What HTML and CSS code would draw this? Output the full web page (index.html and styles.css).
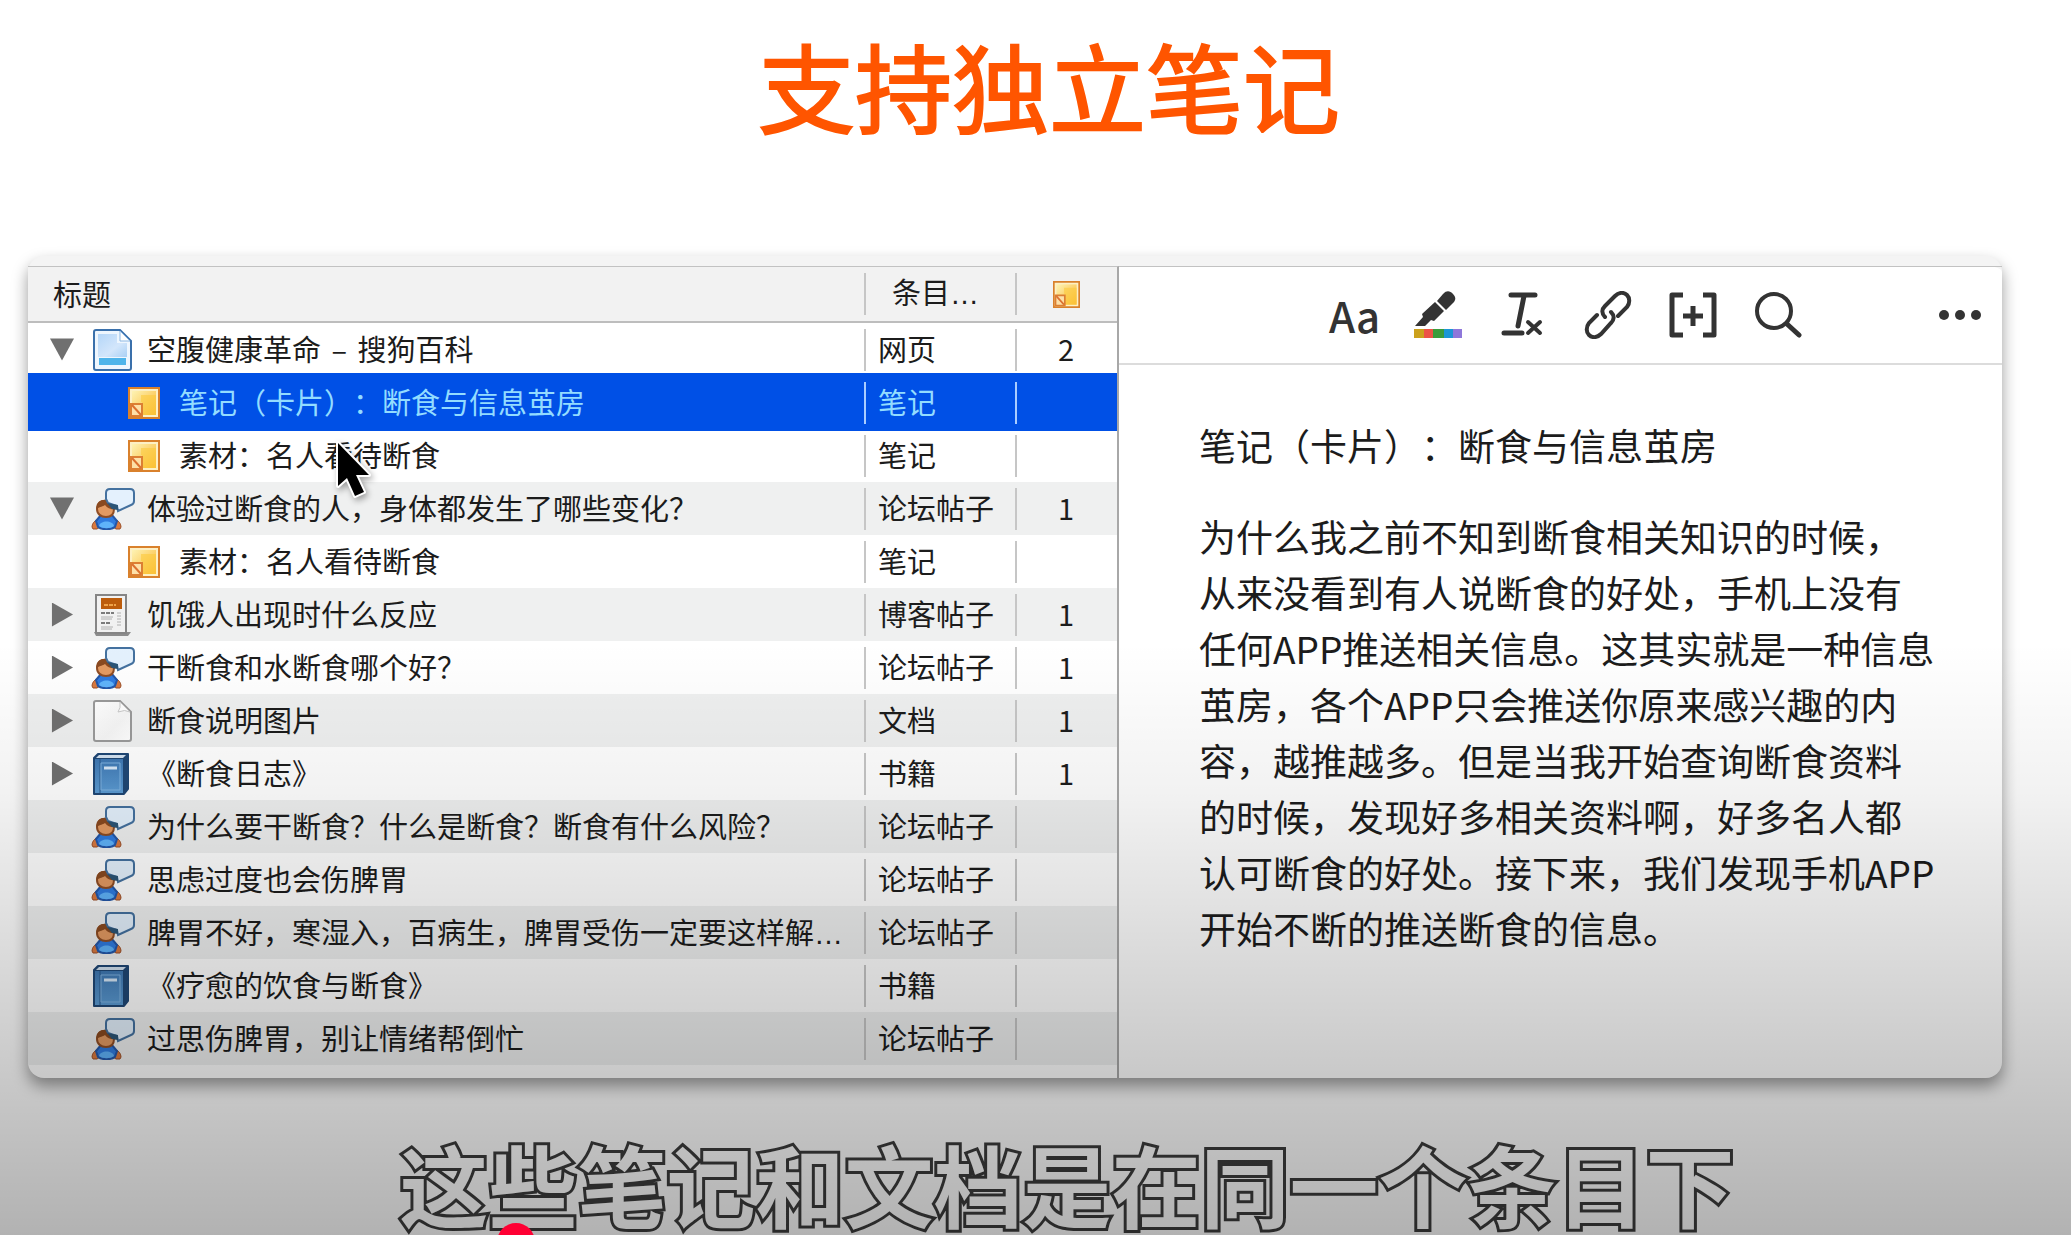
FILE: index.html
```html
<!DOCTYPE html>
<html lang="zh-CN">
<head>
<meta charset="utf-8">
<title>支持独立笔记</title>
<link rel="stylesheet" href="styles.css">
</head>
<body>
<svg class="defs" aria-hidden="true">
  <defs>
    <linearGradient id="g-page" x1="0" y1="0" x2="1" y2="1"><stop offset="0" stop-color="#b4d6f8"/><stop offset=".6" stop-color="#d3e6fb"/><stop offset="1" stop-color="#a9d0f5"/></linearGradient>
    <linearGradient id="g-note" x1="0" y1="0" x2="1" y2="1"><stop offset="0" stop-color="#fdf3b4"/><stop offset="1" stop-color="#fbb42c"/></linearGradient>
    <linearGradient id="g-book" x1="0" y1="0" x2="0" y2="1"><stop offset="0" stop-color="#3f78b3"/><stop offset="1" stop-color="#5b9bd3"/></linearGradient>
    <linearGradient id="g-doc" x1="0" y1="0" x2="1" y2="1"><stop offset="0" stop-color="#fff"/><stop offset=".6" stop-color="#f6f6f6"/><stop offset="1" stop-color="#fff"/></linearGradient>
    <symbol id="i-page" viewBox="0 0 44 42">
      <path d="M5 1h24l11 11v27a2 2 0 0 1-2 2H5a2 2 0 0 1-2-2V3a2 2 0 0 1 2-2z" fill="#eef6fe" stroke="#3a70ab" stroke-width="2"/>
      <path d="M7 5h19v9h10v14H7z" fill="url(#g-page)"/>
      <path d="M29 2v10h10z" fill="#fff" stroke="#8db8e3"/>
      <path d="M8 29h27v7H8z" fill="#4eb4ea"/>
    </symbol>
    <symbol id="i-note" viewBox="0 0 32 32">
      <path d="M1 1h30v30H1z" fill="#fdf0c4" stroke="#d9812c" stroke-width="2"/>
      <path d="M4 4h24v24H4z" fill="url(#g-note)"/>
      <path d="M13 8h15v20H14V15h-1z" fill="#fbc93c" opacity=".6"/>
      <path d="M3 17h11v12H3z" fill="#fde0a8" stroke="#dc7f33" stroke-width="2"/>
      <path d="M4 18l9 10" stroke="#dc7030" stroke-width="2"/>
    </symbol>
    <symbol id="i-forum" viewBox="0 0 44 42">
      <path d="M1 39c0-3 2-6 5-7l3 7-3 2H2zM30 39c0-3-2-6-5-7l-3 7 3 2h4z" fill="#d9793f" stroke="#9c4f28"/>
      <path d="M5 33l5-6h11l5 6-2 6c-4 3-13 3-17 0z" fill="#2f7be0" stroke="#2457a8" stroke-width="2"/>
      <path d="M8 38c1-6 14-6 15 0-4 3-11 3-15 0z" fill="#5fb3fa"/>
      <path d="M6 21c0-6 4-9 10-8 6 0 7 4 7 8 0 5-3 8-8 8s-9-3-9-8z" fill="#e39a62" stroke="#8f4d24" stroke-width="2"/>
      <path d="M6 21c-1-7 4-10 11-9 6 1 7 5 9 9-5 1-9 0-12-4-2 2-5 1-8 4z" fill="#8a4a20"/>
      <path d="M19 1h20q4 0 4 4v8q0 3-3 4l-13 6-1-5-9-3-2-4V5q0-4 4-4z" fill="#e4f1fd" stroke="#44719f" stroke-width="2"/>
      <path d="M16 15l11 2v5l-6-1z" fill="#2c5576"/>
    </symbol>
    <symbol id="i-blog" viewBox="0 0 44 42">
      <path d="M3 38h37l-3 4H5z" fill="#8c8c8c"/>
      <path d="M5 1h30v38H5z" fill="#f1f1f1" stroke="#858585" stroke-width="2"/>
      <path d="M10 4h21v11H10z" fill="#bc5c0c"/>
      <path d="M13 11h12" stroke="#efa34a" stroke-width="2" stroke-dasharray="4 1"/>
      <path d="M10 19h13M10 29h10" stroke="#7b7b7b" stroke-width="2" stroke-dasharray="4 1"/>
      <path d="M10 23h12M10 25h11M10 33h12M10 35h11M26 19h4M26 22h4M26 25h4M26 28h4M26 31h4" stroke="#b0b0b0"/>
    </symbol>
    <symbol id="i-doc" viewBox="0 0 44 42">
      <path d="M5 1h24l11 11v27a2 2 0 0 1-2 2H5a2 2 0 0 1-2-2V3a2 2 0 0 1 2-2z" fill="url(#g-doc)" stroke="#9a9a9a" stroke-width="2"/>
      <path d="M29 2q1 6-2 10 7-3 12 0z" fill="#fff" stroke="#c9c9c9"/>
    </symbol>
    <symbol id="i-book" viewBox="0 0 44 42">
      <path d="M3 5l4-4h30v35l-4 5H3z" fill="#1f4775" stroke="#1f4775" stroke-width="2" stroke-linejoin="round"/>
      <path d="M5 5l3-3h27l-3 3z" fill="#d3e2f1"/>
      <path d="M4 6h28v34H4z" fill="url(#g-book)"/>
      <path d="M9 6v34" stroke="#2a5a8d"/>
      <path d="M10 10h19v27H10z" fill="none" stroke="#7fb2e0"/>
      <path d="M13 15h13" stroke="#d7e8f8" stroke-width="3"/>
    </symbol>
  </defs>
</svg>

<main class="stage">
  <h1 class="headline">支持独立笔记</h1>

  <div class="window">
    <section class="library">
      <table class="items">
        <colgroup><col><col class="col-type"><col class="col-count"></colgroup>
        <thead>
          <tr>
            <th scope="col">标题</th>
            <th scope="col" class="head-type">条目<span class="dots">…</span></th>
            <th scope="col" class="count"><svg class="head-note" role="img" aria-label="笔记"><use href="#i-note"/></svg></th>
          </tr>
        </thead>
        <tbody>
          <tr>
            <td><div class="item"><button class="toggle open" aria-label="折叠"></button><svg class="icon"><use href="#i-page"/></svg><span class="name">空腹健康革命<span class="dash"> – </span>搜狗百科</span></div></td>
            <td>网页</td><td class="count">2</td>
          </tr>
          <tr class="selected">
            <td><div class="item child"><svg class="icon"><use href="#i-note"/></svg><span class="name">笔记（卡片）：断食与信息茧房</span></div></td>
            <td>笔记</td><td class="count"></td>
          </tr>
          <tr>
            <td><div class="item child"><svg class="icon"><use href="#i-note"/></svg><span class="name">素材：名人看待断食</span></div></td>
            <td>笔记</td><td class="count"></td>
          </tr>
          <tr>
            <td><div class="item"><button class="toggle open" aria-label="折叠"></button><svg class="icon"><use href="#i-forum"/></svg><span class="name">体验过断食的人，身体都发生了哪些变化？</span></div></td>
            <td>论坛帖子</td><td class="count">1</td>
          </tr>
          <tr>
            <td><div class="item child"><svg class="icon"><use href="#i-note"/></svg><span class="name">素材：名人看待断食</span></div></td>
            <td>笔记</td><td class="count"></td>
          </tr>
          <tr>
            <td><div class="item"><button class="toggle" aria-label="展开"></button><svg class="icon"><use href="#i-blog"/></svg><span class="name">饥饿人出现时什么反应</span></div></td>
            <td>博客帖子</td><td class="count">1</td>
          </tr>
          <tr>
            <td><div class="item"><button class="toggle" aria-label="展开"></button><svg class="icon"><use href="#i-forum"/></svg><span class="name">干断食和水断食哪个好？</span></div></td>
            <td>论坛帖子</td><td class="count">1</td>
          </tr>
          <tr>
            <td><div class="item"><button class="toggle" aria-label="展开"></button><svg class="icon"><use href="#i-doc"/></svg><span class="name">断食说明图片</span></div></td>
            <td>文档</td><td class="count">1</td>
          </tr>
          <tr>
            <td><div class="item"><button class="toggle" aria-label="展开"></button><svg class="icon"><use href="#i-book"/></svg><span class="name">《断食日志》</span></div></td>
            <td>书籍</td><td class="count">1</td>
          </tr>
          <tr>
            <td><div class="item leaf"><svg class="icon"><use href="#i-forum"/></svg><span class="name">为什么要干断食？什么是断食？断食有什么风险？</span></div></td>
            <td>论坛帖子</td><td class="count"></td>
          </tr>
          <tr>
            <td><div class="item leaf"><svg class="icon"><use href="#i-forum"/></svg><span class="name">思虑过度也会伤脾胃</span></div></td>
            <td>论坛帖子</td><td class="count"></td>
          </tr>
          <tr>
            <td><div class="item leaf"><svg class="icon"><use href="#i-forum"/></svg><span class="name">脾胃不好，寒湿入，百病生，脾胃受伤一定要这样解<span class="dots">…</span></span></div></td>
            <td>论坛帖子</td><td class="count"></td>
          </tr>
          <tr>
            <td><div class="item leaf"><svg class="icon"><use href="#i-book"/></svg><span class="name">《疗愈的饮食与断食》</span></div></td>
            <td>书籍</td><td class="count"></td>
          </tr>
          <tr>
            <td><div class="item leaf"><svg class="icon"><use href="#i-forum"/></svg><span class="name">过思伤脾胃，别让情绪帮倒忙</span></div></td>
            <td>论坛帖子</td><td class="count"></td>
          </tr>
        </tbody>
      </table>
      <svg class="cursor" viewBox="0 0 40 64" aria-hidden="true">
        <path d="M4 4v43l9-8 8 18 9-4-8-17h13z" fill="#000" stroke="#fff" stroke-width="4" stroke-linejoin="round" paint-order="stroke"/>
      </svg>
    </section>

    <section class="editor">
      <div class="toolbar">
        <div class="tools">
          <button class="tool tool-text" aria-label="文字样式">Aa</button>
          <button class="tool" aria-label="高亮颜色">
            <svg viewBox="0 0 48 48">
              <path d="M1 35l8-9-1-3 13-12 9 9-10 10-3-1-6 6z" fill="#333"/>
              <path d="M23 10l6-7c4-4 7-3 10 0s3 6 0 9l-7 7z" fill="#333"/>
              <path d="M0 38h10v9H0z" fill="#cba11c"/><path d="M10 38h9v9h-9z" fill="#ec5247"/><path d="M19 38h11v9H19z" fill="#3a9c3c"/><path d="M30 38h9v9h-9z" fill="#1c97d6"/><path d="M39 38h9v9h-9z" fill="#8e77da"/>
            </svg>
          </button>
          <button class="tool" aria-label="清除格式">
            <svg viewBox="0 0 48 48" fill="none" stroke="#333" stroke-linecap="round">
              <path d="M12 4h24M5 42h18" stroke-width="5"/><path d="M25 5l-6 30" stroke-width="5"/><path d="M29 31l12 11M41 31l-12 11" stroke-width="4"/>
            </svg>
          </button>
          <button class="tool" aria-label="链接">
            <svg viewBox="0 0 48 48" fill="none" stroke="#333" stroke-width="4" stroke-linecap="round">
              <path d="M21 26c-4-4-3-8 0-11L31 5c4-4 9-4 12-1s3 8 0 12l-9 9"/><path d="M27 21c4 4 3 8 0 11L17 43c-4 4-9 4-12 1s-3-8 0-12l8-8"/>
            </svg>
          </button>
          <button class="tool" aria-label="插入引用">
            <svg viewBox="0 0 48 48" fill="none" stroke="#333" stroke-width="5">
              <path d="M14 4H3v40h11M34 4h11v40H34" stroke-linejoin="round"/><path d="M24 15v20M14 25h20"/>
            </svg>
          </button>
          <button class="tool" aria-label="查找">
            <svg viewBox="0 0 48 48" fill="none" stroke="#333" stroke-width="4" stroke-linecap="round">
              <circle cx="20" cy="20" r="17"/><path d="M33 33l12 11" stroke-width="5"/>
            </svg>
          </button>
        </div>
        <button class="tool more" aria-label="更多">
          <svg viewBox="0 0 48 48" fill="#333"><circle cx="8" cy="24" r="5"/><circle cx="24" cy="24" r="5"/><circle cx="40" cy="24" r="5"/></svg>
        </button>
      </div>
      <article class="note">
        <h2>笔记（卡片）：断食与信息茧房</h2>
        <p>为什么我之前不知到断食相关知识的时候，从来没看到有人说断食的好处，手机上没有任何APP推送相关信息。这其实就是一种信息茧房，各个APP只会推送你原来感兴趣的内容，越推越多。但是当我开始查询断食资料的时候，发现好多相关资料啊，好多名人都认可断食的好处。接下来，我们发现手机APP开始不断的推送断食的信息。</p>
      </article>
    </section>
  </div>

  <p class="caption">这些笔记和文档是在同一个条目下</p>
  <div class="shade"></div>
  <span class="playhead"></span>
</main>
</body>
</html>
```
FILE: styles.css
```css
* {
  box-sizing: border-box;
}

body {
  margin: 0;
  background: #fff;
  color: #1c1c1c;
  font-family: "Noto Sans CJK SC", sans-serif;
  font-size: 29px;
  text-spacing-trim: space-all;
  text-autospace: no-autospace;
}

button {
  border: 0;
  padding: 0;
  background: none;
  color: inherit;
  font: inherit;
}

.defs {
  position: absolute;
  width: 0;
  height: 0;
}

.stage {
  position: relative;
  min-height: 100vh;
  padding-top: 24px;
  overflow: hidden;
}

.headline {
  margin: 0 0 112px;
  padding-left: 27px;
  color: #ff5500;
  font-size: 97px;
  font-weight: 400;
  line-height: 120px;
  text-align: center;
  -webkit-text-stroke: 2px #ff5500;
}

.window {
  display: grid;
  grid-template-columns: 1091fr 883fr;
  margin: 0 69px 0 28px;
  border-top: 10px solid #f4f4f4;
  border-radius: 16px;
  background: #fff;
  box-shadow: 0 8px 16px rgba(0, 0, 0, .4);
}

/* item list */

.library {
  position: relative;
  min-width: 0;
  padding-bottom: 13px;
  border-top: 1px solid #c2c2c2;
  border-right: 2px solid #a8a8a8;
  border-bottom-left-radius: 16px;
}

.items {
  width: 100%;
  table-layout: fixed;
  border-collapse: separate;
  border-spacing: 0;
  line-height: 42px;
}

.col-type {
  width: 151px;
}

.col-count {
  width: 102px;
}

.items th {
  height: 56px;
  padding: 0 0 3px 25px;
  border-bottom: 2px solid #bdbdbd;
  background-color: #f2f2f2;
  font-weight: 400;
  text-align: left;
}

.items td {
  height: 53px;
  padding: 0 0 4px 14px;
  white-space: nowrap;
}

.items td:first-child {
  padding: 0;
}

.items td + td,
.items th + th {
  background-image: linear-gradient(#c6c6c6, #c6c6c6);
  background-position: left center;
  background-repeat: no-repeat;
  background-size: 2px 42px;
}

.items .head-type {
  padding-left: 28px;
}

.items .count {
  padding-left: 0;
  text-align: center;
}

.items tbody tr:nth-child(even) {
  background-color: #eff0f0;
}

.items tbody tr.selected {
  background-color: #0050e6;
  box-shadow: 0 -3px #0050e6, 0 2px #0050e6;
  color: #93dcff;
}

.items .selected td + td {
  background-image: linear-gradient(#a9ccff, #a9ccff);
}

.dots {
  font-family: "Liberation Sans", sans-serif;
}

.dash {
  padding: 0 4px;
}

.head-note {
  display: inline-block;
  width: 27px;
  height: 27px;
  vertical-align: -2px;
}

.item {
  display: flex;
  align-items: center;
  gap: 12px;
  padding-left: 22px;
}

.item .icon {
  flex: none;
  width: 44px;
  height: 42px;
}

.leaf {
  padding-left: 63px;
}

.child {
  gap: 19px;
  padding-left: 100px;
}

.child .icon {
  width: 32px;
  height: 32px;
}

.name {
  padding-bottom: 4px;
}

.item .dots {
  line-height: 1;
}

.toggle {
  flex: none;
  width: 24px;
  height: 24px;
  margin-right: 5px;
  background: #707070;
  clip-path: polygon(8% 0, 96% 50%, 8% 100%);
}

.toggle.open {
  clip-path: polygon(0 4%, 100% 4%, 50% 96%);
}

.cursor {
  position: absolute;
  top: 172px;
  left: 306px;
  width: 40px;
  height: 64px;
  filter: drop-shadow(2px 3px 3px rgba(0, 0, 0, .35));
}

/* note editor */

.editor {
  min-width: 0;
  border-top: 1px solid #c2c2c2;
}

.toolbar {
  display: grid;
  grid-template-columns: 1fr auto 1fr;
  align-items: center;
  height: 98px;
  padding: 0 18px 0 28px;
  border-bottom: 2px solid #dcdcdc;
}

.tools {
  display: flex;
  grid-column: 2;
  gap: 37px;
}

.tool {
  width: 48px;
  height: 48px;
  color: #333;
}

.tool svg {
  display: block;
  width: 48px;
  height: 48px;
}

.tool-text {
  font-size: 42px;
  font-weight: 500;
  line-height: 44px;
}

.more {
  justify-self: end;
}

.note {
  padding: 52px 66px 40px 80px;
  font-size: 37px;
  line-height: 56px;
}

.note h2 {
  margin: 0 0 35px;
  font-size: 37px;
  font-weight: 400;
}

.note p {
  margin: 0;
}

/* video layer */

.caption {
  margin: 58px 0 0;
  padding-left: 63px;
  color: #fff;
  font-size: 89px;
  font-weight: 700;
  line-height: 94px;
  text-align: center;
  white-space: nowrap;
  -webkit-text-stroke: 6px #3c3c3c;
  paint-order: stroke fill;
}

.shade {
  position: absolute;
  inset: 0;
  background: linear-gradient(transparent 52%, rgba(0, 0, 0, .05) 64%, rgba(0, 0, 0, .15) 78%, rgba(0, 0, 0, .3));
  pointer-events: none;
}

.playhead {
  position: absolute;
  bottom: -26px;
  left: 24%;
  width: 38px;
  height: 38px;
  border-radius: 50%;
  background: #ff0033;
}
```
